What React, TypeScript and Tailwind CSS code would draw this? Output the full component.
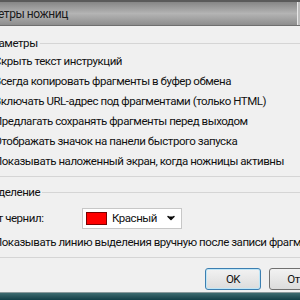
import { ChevronDown } from "lucide-react"

const options = [
  "Скрыть текст инструкций",
  "Всегда копировать фрагменты в буфер обмена",
  "Включать URL-адрес под фрагментами (только HTML)",
  "Предлагать сохранять фрагменты перед выходом",
  "Отображать значок на панели быстрого запуска",
  "Показывать наложенный экран, когда ножницы активны",
]

function Check({ label }: { label: string }) {
  return (
    <div className="flex h-[20px] items-center gap-[6px]">
      <span className="h-[13px] w-[13px] shrink-0 border border-[#8e8f8f] bg-white" />
      <span className="whitespace-nowrap">{label}</span>
    </div>
  )
}

export default function App() {
  return (
    <div
      className="flex h-[300px] w-[300px] flex-col overflow-hidden bg-[#f0f0f0] text-[11.5px] leading-[16px] tracking-[-0.45px] text-[#111]"
      style={{ fontFamily: 'Roboto, "Noto Sans", sans-serif' }}
    >
      {/* Title bar */}
      <div className="flex h-[26px] shrink-0 items-center border-t-2 border-b border-t-[#5a5a5a] border-b-[#6f6f6f] bg-gradient-to-b from-[#868686] via-[#b4b4b4] to-[#8e8e8e]">
        <span className="-ml-[37px] whitespace-nowrap text-[12px] text-[#1a1a1a]">Параметры ножниц</span>
        <div className="ml-auto h-full w-[3px] border-l border-[#e8e8e8] bg-[#bdbdbd]" />
      </div>

      {/* Body */}
      <div className="-ml-[34px] flex w-[350px] flex-col">
        <fieldset className="mt-[9px] border border-[#d5d5d5] pb-[5px] pl-[8px]">
          <legend className="ml-[2px] px-[2px]">Параметры</legend>
          <div className="flex flex-col">
            {options.map((o) => (
              <Check key={o} label={o} />
            ))}
          </div>
        </fieldset>

        <fieldset className="mt-[7px] border border-[#d5d5d5] pb-[5px] pl-[8px]">
          <legend className="ml-[6px] px-[2px]">Выделение</legend>
          <div className="mt-[8px] flex h-[20px] items-center">
            <span className="ml-[3px] w-[104px] whitespace-nowrap">Цвет чернил:</span>
            <div className="flex h-[21px] w-[100px] items-center border border-[#c7c7c7] bg-white pl-[3px] pr-[4px]">
              <span className="h-[13px] w-[21px] border border-[#7a0000] bg-[#ff0000]" />
              <span className="ml-[5px]">Красный</span>
              <ChevronDown className="ml-auto h-[12px] w-[12px] fill-black" strokeWidth={3} />
            </div>
          </div>
          <div className="mt-[4px]">
            <Check label="Показывать линию выделения вручную после записи фрагмента" />
          </div>
        </fieldset>
      </div>

      {/* Buttons */}
      <div className="mt-[10px] flex gap-[8px] pl-[205px]">
        <button className="h-[22px] w-[56px] shrink-0 rounded-[3px] border border-[#3c7fb1] bg-gradient-to-b from-[#f2f2f2] to-[#dcdcdc] shadow-[inset_0_0_0_1px_#bfe6f7]">
          OK
        </button>
        <button className="h-[22px] w-[75px] shrink-0 rounded-[3px] border border-[#707070] bg-gradient-to-b from-[#f2f2f2] to-[#dcdcdc]">
          Отмена
        </button>
      </div>

      {/* Desktop behind */}
      <div className="mt-auto h-[8px] border-t border-[#8a9a9c] bg-gradient-to-b from-[#3d6b70] to-[#123f47]" />
    </div>
  )
}
